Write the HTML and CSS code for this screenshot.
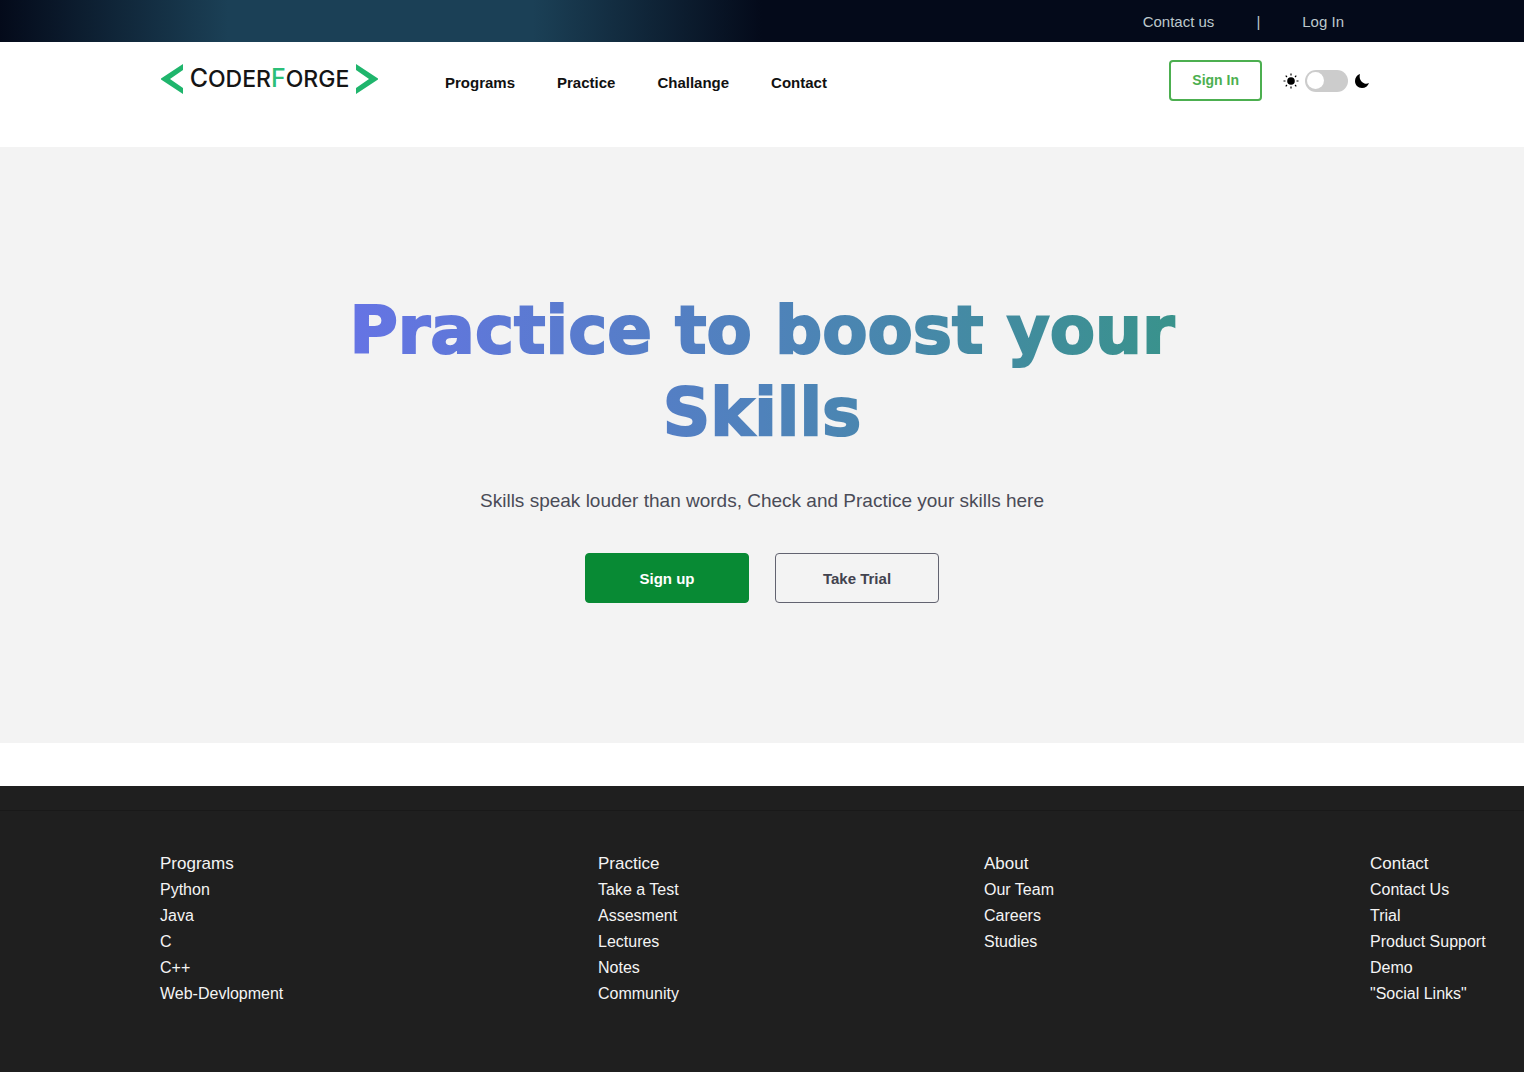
FILE: index.html
```html
<!DOCTYPE html>
<html lang="en">
<head>
<meta charset="utf-8">
<meta name="viewport" content="width=device-width, initial-scale=1">
<title>CoderForge</title>
<link rel="stylesheet" href="styles.css">
</head>
<body>
<div class="topbar">
  <a href="#contact">Contact us</a>
  <span>|</span>
  <a href="#login">Log In</a>
</div>
<header class="header">
  <a class="logo" href="#" aria-label="CoderForge">
    <svg width="24" height="32" viewBox="0 0 24 32" aria-hidden="true"><path d="M23 1v6L10 16l13 9v6L1 16.500v-1z" fill="#1fb56c"/></svg>
    <span class="logo-text"><span class="logo-cap">C</span>ODER<span class="logo-cap logo-green">F</span>ORGE</span>
    <svg width="24" height="32" viewBox="0 0 24 32" aria-hidden="true"><path d="M1 1v6l13 9-13 9v6l22-14.500v-1z" fill="#1fb56c"/></svg>
  </a>
  <nav class="nav">
    <a href="#programs">Programs</a>
    <a href="#practice">Practice</a>
    <a href="#challenge">Challange</a>
    <a href="#contact">Contact</a>
  </nav>
  <div class="actions">
    <button class="signin" type="button">Sign In</button>
    <label class="theme">
      <svg width="16" height="16" viewBox="0 0 16 16" aria-hidden="true"><circle cx="8" cy="8" r="3.800"/><path d="M8 .5v2M8 13.500v2M.5 8h2M13.500 8h2M2.700 2.700l1.300 1.300M12 12l1.300 1.300M2.700 13.300L4 12M12 4l1.300-1.300" stroke="#000" stroke-width="1.200"/></svg>
      <input class="switch" type="checkbox" aria-label="Dark theme">
      <svg width="16" height="16" viewBox="0 0 16 16" aria-hidden="true"><path d="M6 1C2.800 2 1 4.800 1 8c0 4 3 7 7 7 3.300 0 6-1.900 7-5-1.500.7-3 .9-4.500.4C6.800 9.300 4.800 5 6 1z"/></svg>
    </label>
  </div>
</header>
<main class="hero">
  <h1>Practice to boost your Skills</h1>
  <p>Skills speak louder than words, Check and Practice your skills here</p>
  <div class="hero-actions">
    <button class="btn btn-primary" type="button">Sign up</button>
    <button class="btn" type="button">Take Trial</button>
  </div>
</main>
<footer class="footer">
  <div class="footer-columns">
    <section>
      <h2>Programs</h2>
      <ul><li><a href="#">Python</a></li><li><a href="#">Java</a></li><li><a href="#">C</a></li><li><a href="#">C++</a></li><li><a href="#">Web-Devlopment</a></li></ul>
    </section>
    <section>
      <h2>Practice</h2>
      <ul><li><a href="#">Take a Test</a></li><li><a href="#">Assesment</a></li><li><a href="#">Lectures</a></li><li><a href="#">Notes</a></li><li><a href="#">Community</a></li></ul>
    </section>
    <section>
      <h2>About</h2>
      <ul><li><a href="#">Our Team</a></li><li><a href="#">Careers</a></li><li><a href="#">Studies</a></li></ul>
    </section>
    <section>
      <h2>Contact</h2>
      <ul><li><a href="#">Contact Us</a></li><li><a href="#">Trial</a></li><li><a href="#">Product Support</a></li><li><a href="#">Demo</a></li><li><a href="#">"Social Links"</a></li></ul>
    </section>
  </div>
</footer>
</body>
</html>
```
FILE: styles.css
```css
* { box-sizing: border-box; }

body {
  display: flex;
  flex-direction: column;
  min-height: 100vh;
  margin: 0;
  background: #fff;
  font-family: "Liberation Sans", Arial, sans-serif;
  font-size: 15px;
}

a { color: inherit; text-decoration: none; }
button { font-family: inherit; cursor: pointer; }

.topbar {
  display: flex;
  justify-content: flex-end;
  gap: 42px;
  padding: 13px 180px 11px;
  background: linear-gradient(90deg, #040a1a 0%, #1b4056 15%, #1b4056 35%, #040a1a 50%);
  color: #bcc8cc;
  line-height: 18px;
}

.header {
  display: flex;
  align-items: flex-start;
  padding: 18px 154px 46px 160px;
}

.logo {
  display: flex;
  align-items: flex-start;
  justify-content: space-between;
  width: 219px;
  padding-top: 3px;
}

.logo-text {
  color: #151515;
  font-family: Inter, sans-serif;
  font-size: 23px;
  font-weight: 500;
  line-height: 30px;
}

.logo-cap { font-size: 25px; }
.logo-green { color: #2bbf78; }

.nav {
  display: flex;
  gap: 42px;
  margin-left: 66px;
  padding-top: 14px;
  color: #111;
  font-weight: 700;
  line-height: 18px;
}

.actions {
  display: flex;
  align-items: center;
  gap: 21px;
  margin-left: auto;
}

.signin {
  padding: 10px 21px;
  border: 2px solid #4caf50;
  border-radius: 4px;
  background: #fff;
  color: #4caf50;
  font-size: 14px;
  font-weight: 700;
  line-height: 17px;
}

.theme { display: flex; align-items: center; gap: 6px; }

.switch {
  display: flex;
  align-items: center;
  width: 43px;
  height: 22px;
  margin: 0;
  padding: 2px;
  border-radius: 11px;
  background: #ccc;
  appearance: none;
}

.switch::before {
  width: 17px;
  height: 17px;
  border-radius: 50%;
  background: #fff;
  content: "";
}

.switch:checked { justify-content: flex-end; }

.hero {
  display: flex;
  flex-direction: column;
  align-items: center;
  padding: 143px 24px 140px;
  background: #f3f3f3;
  color: #4a4b57;
  text-align: center;
}

.hero h1 {
  max-width: 856px;
  margin: 0;
  background: linear-gradient(90deg, #6673e6, #4f82bb 50%, #38938a);
  background-clip: text;
  -webkit-background-clip: text;
  -webkit-text-stroke: 2px transparent;
  color: transparent;
  font-family: "Arial Black", "DejaVu Sans", sans-serif;
  font-size: 66px;
  font-weight: 900;
  line-height: 82px;
}

.hero p {
  margin: 35px 0 0;
  font-size: 19px;
  line-height: 24px;
}

.hero-actions { display: flex; gap: 26px; margin-top: 40px; }

.btn {
  width: 164px;
  height: 50px;
  border: 1px solid #626370;
  border-radius: 4px;
  background: transparent;
  color: #42434f;
  font-size: 15px;
  font-weight: 700;
}

.btn-primary { border-color: #088a34; background: #088a34; color: #fff; }

.footer {
  flex: 1;
  margin-top: 43px;
  padding-top: 24px;
  background: #1f1f1f;
  color: #f4f4f4;
  font-size: 16px;
  line-height: 26px;
}

.footer-columns {
  display: grid;
  grid-template-columns: 438fr 386fr 386fr 154fr;
  padding: 40px 0 64px 160px;
  border-top: 1px solid #191919;
}

.footer h2 { margin: 0; font-size: 17px; font-weight: 400; }
.footer ul { margin: 0; padding: 0; list-style: none; }
```
